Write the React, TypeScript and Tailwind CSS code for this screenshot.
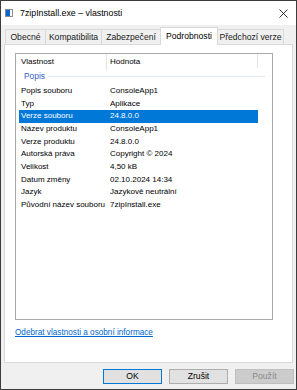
import React from 'react';

const rows: [string, string][] = [
  ['Popis souboru', 'ConsoleApp1'],
  ['Typ', 'Aplikace'],
  ['Verze souboru', '24.8.0.0'],
  ['Název produktu', 'ConsoleApp1'],
  ['Verze produktu', '24.8.0.0'],
  ['Autorská práva', 'Copyright © 2024'],
  ['Velikost', '4,50 kB'],
  ['Datum změny', '02.10.2024 14:34'],
  ['Jazyk', 'Jazykově neutrální'],
  ['Původní název souboru', '7zipInstall.exe'],
];

const tabs = [
  { label: 'Obecné', w: 'w-[41px]' },
  { label: 'Kompatibilita', w: 'w-[57px]' },
  { label: 'Zabezpečení', w: 'w-[60px]' },
  { label: 'Podrobnosti', w: 'w-[58px]', active: true },
  { label: 'Předchozí verze', w: 'w-[67px]' },
];

export default function App() {
  return (
    <div
      className="w-[297px] h-[390px] border border-[#3c3c3c] flex flex-col bg-[#f0f0f0] text-black overflow-hidden"
      style={{ fontFamily: '"Liberation Sans", Arial, sans-serif' }}
    >
      {/* Title bar */}
      <div className="h-[24px] bg-white flex items-center pl-[4px] pr-[8px] shrink-0">
        <svg width="8" height="8" viewBox="0 0 8 8">
          <rect x="0.5" y="0.5" width="7" height="7" fill="#fff" stroke="#8c8c8c" />
          <rect x="1" y="1" width="4" height="6" fill="#0a64d2" />
        </svg>
        <span className="ml-[7px] text-[8.8px] leading-none">7zipInstall.exe – vlastnosti</span>
        <svg className="ml-auto" width="9" height="9" viewBox="0 0 9 9">
          <path d="M0.5 0.5 L8.5 8.5 M8.5 0.5 L0.5 8.5" stroke="#222" strokeWidth="0.9" />
        </svg>
      </div>

      {/* Tabs */}
      <div className="flex items-end pt-[2px] pl-[4px] h-[19px] shrink-0">
        {tabs.map((t, i) =>
          t.active ? (
            <div
              key={t.label}
              className={`${t.w} h-[18px] -ml-px mb-[-1px] relative z-10 bg-white border border-b-0 border-[#d9d9d9] flex items-center justify-center text-[8.6px]`}
            >
              {t.label}
            </div>
          ) : (
            <div
              key={t.label}
              className={`${t.w} h-[15px] ${i > 0 ? '-ml-px' : ''} bg-[#f0f0f0] border border-b-0 border-[#d9d9d9] flex items-center justify-center text-[8.6px] text-[#1a1a1a]`}
            >
              {t.label}
            </div>
          )
        )}
      </div>

      {/* Panel */}
      <div className="ml-[3px] w-[289px] h-[319px] bg-white border border-[#d9d9d9] pl-[10px] pt-[8px] shrink-0">
        <div className="w-[258px] h-[267px] border border-[#a9a9a9] text-[8px] leading-none">
          {/* Header */}
          <div className="h-[16px] flex items-center relative">
            <span className="pl-[5px] w-[90px]">Vlastnost</span>
            <div className="w-px h-[16px] bg-[#e5e5e5]" />
            <span className="pl-[3px] w-[150px]">Hodnota</span>
            <div className="w-px h-[14px] self-start bg-[#e5e5e5]" />
          </div>
          {/* Group */}
          <div className="h-[12px] mb-[2.6px] flex items-center pl-[8px] pr-[7px]">
            <span className="text-[#3a62c8] text-[8.4px]">Popis</span>
            <div className="ml-[3px] flex-1 h-px bg-[#dde6f7]" />
          </div>
          {rows.map(([k, v]) => {
            const sel = k === 'Verze souboru';
            return (
              <div
                key={k}
                className={`ml-[3px] w-[239px] h-[12.7px] flex items-center ${sel ? 'bg-[#0078d7] text-white' : ''}`}
              >
                <span className="pl-[2px] w-[89px] whitespace-nowrap">{k}</span>
                <span className="pl-[2px] whitespace-nowrap">{v}</span>
              </div>
            );
          })}
        </div>
        <div className="mt-[9px] text-[8.2px] leading-none text-[#0066cc] underline">
          Odebrat vlastnosti a osobní informace
        </div>
      </div>

      {/* Buttons */}
      <div className="flex mt-[6px] pl-[102px] gap-[7px] text-[8.6px]">
        <div className="w-[59px] h-[15px] bg-[#e1e1e1] border border-[#0078d7] flex items-center justify-center">
          OK
        </div>
        <div className="w-[59px] h-[15px] bg-[#e1e1e1] border border-[#adadad] flex items-center justify-center">
          Zrušit
        </div>
        <div className="w-[59px] h-[15px] bg-[#cccccc] border border-[#bfbfbf] text-[#8a8a8a] flex items-center justify-center">
          Použít
        </div>
      </div>
    </div>
  );
}
